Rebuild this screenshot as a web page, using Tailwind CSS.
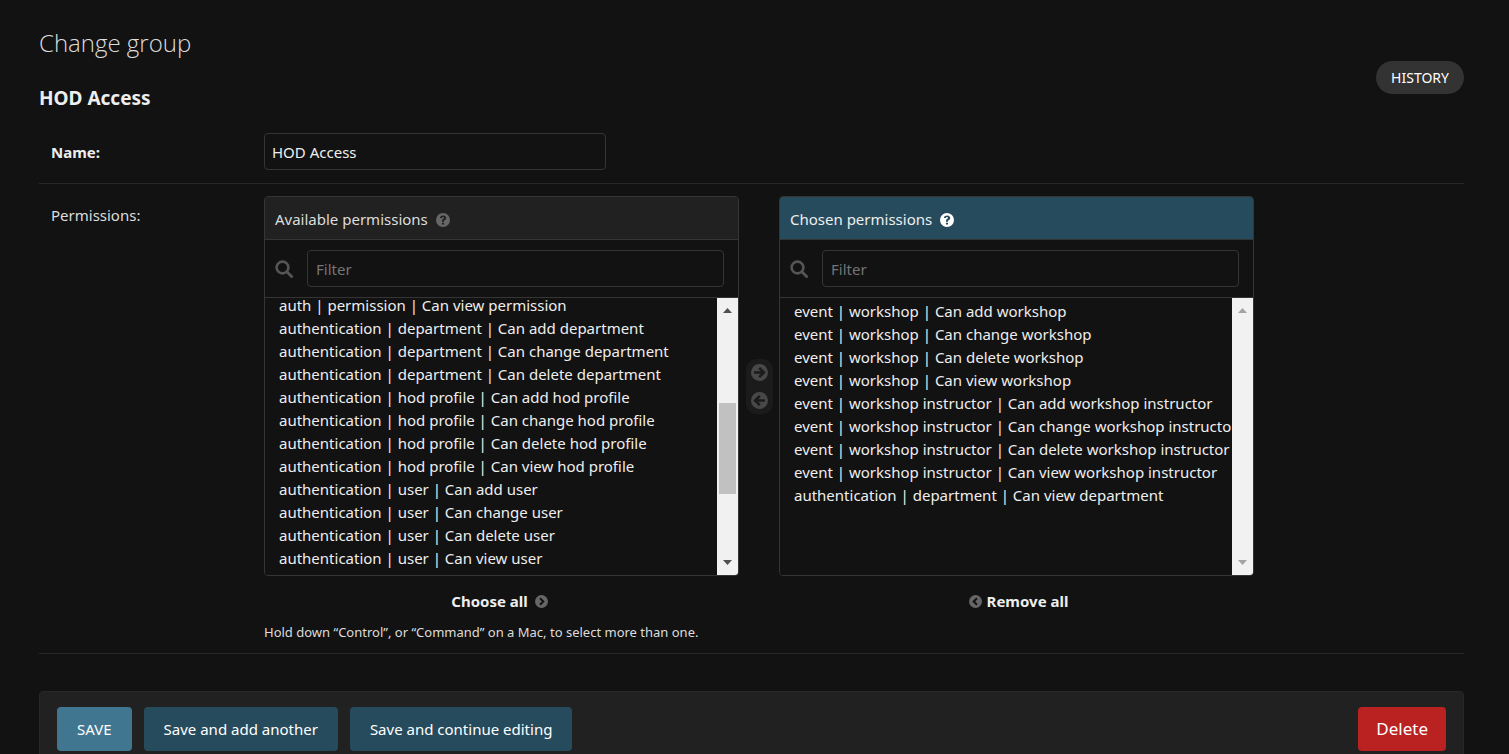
<!DOCTYPE html>
<html lang="en">
<head>
<meta charset="utf-8">
<meta name="viewport" content="width=device-width, initial-scale=1">
<title>Change group</title>
<script src="https://cdn.jsdelivr.net/npm/@tailwindcss/browser@4"></script>
</head>
<body class="h-screen overflow-hidden bg-[#121212] font-['Noto_Sans','Open_Sans',sans-serif] text-[15px] text-[#eeeeee]">
<svg class="hidden" aria-hidden="true">
  <symbol id="search" viewBox="0 0 18 18"><circle cx="7.5" cy="7.5" r="5.9" fill="none" stroke="currentColor" stroke-width="2.6"/><path d="M11.8 11.8L16.6 16.6" stroke="currentColor" stroke-width="2.8" stroke-linecap="round"/></symbol>
  <symbol id="help" viewBox="0 0 14 14"><path fill="currentColor" fill-rule="evenodd" d="M7 0a7 7 0 1 1 0 14A7 7 0 0 1 7 0ZM6 9.7v1.8h2V9.7ZM3.9 5h1.9c.1-.7.5-1 1.2-1 .6 0 1 .3 1 .8 0 .6-.4.8-1 1.200C6.300 6.500 6 7 6 7.800v.9h2v-.5c0-.4.3-.7.9-1.100C9.700 6.600 10.200 5.900 10.200 4.900 10.200 3.300 8.900 2.400 7.100 2.400 5.200 2.400 4 3.300 3.900 5Z"/></symbol>
  <symbol id="arrow" viewBox="0 0 17 17"><circle cx="8.500" cy="8.500" r="8.500" fill="currentColor"/><path d="M3 8.500H12.500M8.200 3.800L12.900 8.500L8.200 13.200" fill="none" stroke="#1b1b1b" stroke-width="2.600"/></symbol>
  <symbol id="chevron" viewBox="0 0 13 13"><circle cx="6.500" cy="6.500" r="6.500" fill="currentColor"/><path d="M5 3.200L8.300 6.500L5 9.800" fill="none" stroke="#121212" stroke-width="2"/></symbol>
  <symbol id="up" viewBox="0 0 9 5"><path fill="currentColor" d="M0 5L4.500 0L9 5Z"/></symbol>
</svg>
<main class="pt-[27px] pr-[45px] pl-[39px]">
  <div class="flex items-end justify-between">
    <div>
      <h1 class="font-['Open_Sans','Noto_Sans',sans-serif] text-2xl leading-8 font-light text-[#dddddd]">Change group</h1>
      <h2 class="mt-[25px] text-[19px] leading-7 font-bold">HOD Access</h2>
    </div>
    <a href="#" class="mb-[18px] rounded-full bg-[#333333] px-[15px] text-sm leading-[33px] text-white">HISTORY</a>
  </div>
  <form>
    <div class="mt-[9px] flex items-center border-b border-[#272727] pt-3 pb-[13px] pl-3">
      <label for="name" class="w-[213px] leading-6 font-bold">Name:</label>
      <input id="name" type="text" value="HOD Access" class="h-[37px] w-[342px] rounded border border-[#353535] bg-[#121212] px-[7px]">
    </div>
    <div class="flex border-b border-[#272727] pt-3 pb-[11px] pl-3">
      <label for="available" class="w-[213px] shrink-0 pt-[7px] leading-6 text-[#dddddd]">Permissions:</label>
      <div class="min-w-0 flex-1">
        <div class="flex max-w-[990px]">
          <section class="min-w-0 flex-1">
            <div class="overflow-hidden rounded border border-[#353535]">
              <h3 class="flex h-[43px] items-center gap-2 border-b border-[#353535] bg-[#212121] px-[10px] pt-[3px] text-[#dddddd]">Available permissions <svg class="size-[14px] text-[#666666]"><use href="#help"/></svg></h3>
              <div class="flex items-center border-b border-[#353535] py-[10px] pr-[14px] pl-[10px]">
                <svg class="size-[18px] shrink-0 text-[#555555]"><use href="#search"/></svg>
                <input type="text" aria-label="Filter available permissions" placeholder="Filter" class="ml-[14px] h-[37px] min-w-0 flex-1 rounded border border-[#353535] bg-[#121212] px-2 placeholder:text-[#757575]">
              </div>
              <div class="flex h-[277px]">
                <select id="available" multiple size="12" class="block h-full min-w-0 flex-1 overflow-hidden bg-[#121212] pl-[14px] text-[15px] text-[#eeeeee] [scrollbar-width:none] [&>option]:h-[23px] [&>option]:p-0 [&>option]:leading-[23px]">
                  <option>auth | permission | Can delete permission</option>
                  <option>auth | permission | Can view permission</option>
                  <option>authentication | department | Can add department</option>
                  <option>authentication | department | Can change department</option>
                  <option>authentication | department | Can delete department</option>
                  <option>authentication | hod profile | Can add hod profile</option>
                  <option>authentication | hod profile | Can change hod profile</option>
                  <option>authentication | hod profile | Can delete hod profile</option>
                  <option>authentication | hod profile | Can view hod profile</option>
                  <option>authentication | user | Can add user</option>
                  <option>authentication | user | Can change user</option>
                  <option>authentication | user | Can delete user</option>
                  <option>authentication | user | Can view user</option>
                  <option>contenttypes | content type | Can add content type</option>
                </select>
                <div class="flex w-[21px] flex-col items-center bg-[#f1f1f1] py-[10px] text-[#505050]" aria-hidden="true">
                  <svg class="h-[5px] w-[9px]"><use href="#up"/></svg>
                  <div class="mt-[90px] mb-auto h-[91px] w-[17px] bg-[#c1c1c1]"></div>
                  <svg class="h-[5px] w-[9px] rotate-180"><use href="#up"/></svg>
                </div>
              </div>
            </div>
            <a href="#" class="mt-[13px] flex items-center justify-center gap-[7px] pr-1 leading-6 font-bold">Choose all <svg class="size-[13px] text-[#666666]"><use href="#chevron"/></svg></a>
          </section>
          <div class="mt-[163px] flex h-[55px] w-10 justify-center">
            <div class="flex w-[27px] flex-col items-center justify-center gap-[11px] rounded-[10px] bg-[#1b1b1b] text-[#484848]">
              <button type="button" aria-label="Choose" class="block size-[17px]"><svg class="size-[17px]"><use href="#arrow"/></svg></button>
              <button type="button" aria-label="Remove" class="block size-[17px]"><svg class="size-[17px] rotate-180"><use href="#arrow"/></svg></button>
            </div>
          </div>
          <section class="min-w-0 flex-1">
            <div class="overflow-hidden rounded border border-[#353535]">
              <h3 class="flex h-[43px] items-center gap-2 border-b border-[#353535] bg-[#264b5d] px-[10px] pt-[3px] text-[#eeeeee]">Chosen permissions <svg class="size-[14px] text-white"><use href="#help"/></svg></h3>
              <div class="flex items-center border-b border-[#353535] py-[10px] pr-[14px] pl-[10px]">
                <svg class="size-[18px] shrink-0 text-[#555555]"><use href="#search"/></svg>
                <input type="text" aria-label="Filter chosen permissions" placeholder="Filter" class="ml-[14px] h-[37px] min-w-0 flex-1 rounded border border-[#353535] bg-[#121212] px-2 placeholder:text-[#757575]">
              </div>
              <div class="flex h-[277px]">
                <select aria-label="Chosen permissions" multiple size="12" class="block h-full min-w-0 flex-1 overflow-hidden bg-[#121212] pt-[3px] pl-[14px] text-[15px] text-[#eeeeee] [scrollbar-width:none] [&>option]:h-[23px] [&>option]:p-0 [&>option]:leading-[23px]">
                  <option>event | workshop | Can add workshop</option>
                  <option>event | workshop | Can change workshop</option>
                  <option>event | workshop | Can delete workshop</option>
                  <option>event | workshop | Can view workshop</option>
                  <option>event | workshop instructor | Can add workshop instructor</option>
                  <option>event | workshop instructor | Can change workshop instructor</option>
                  <option>event | workshop instructor | Can delete workshop instructor</option>
                  <option>event | workshop instructor | Can view workshop instructor</option>
                  <option>authentication | department | Can view department</option>
                </select>
                <div class="flex w-[21px] flex-col items-center justify-between bg-[#f1f1f1] py-[10px] text-[#a3a3a3]" aria-hidden="true">
                  <svg class="h-[5px] w-[9px]"><use href="#up"/></svg>
                  <svg class="h-[5px] w-[9px] rotate-180"><use href="#up"/></svg>
                </div>
              </div>
            </div>
            <a href="#" class="mt-[13px] flex items-center justify-center gap-[5px] pl-1 leading-6 font-bold"><svg class="size-[13px] rotate-180 text-[#666666]"><use href="#chevron"/></svg> Remove all</a>
          </section>
        </div>
        <p class="mt-[9px] text-[13px] leading-5 text-[#dddddd]">Hold down “Control”, or “Command” on a Mac, to select more than one.</p>
      </div>
    </div>
    <div class="mt-[37px] flex gap-3 rounded border border-[#272727] bg-[#212121] px-[17px] py-[15px] text-white">
      <button type="submit" class="h-11 rounded bg-[#417690] px-5">SAVE</button>
      <button type="submit" class="h-11 rounded bg-[#264b5d] px-5">Save and add another</button>
      <button type="submit" class="h-11 rounded bg-[#264b5d] px-5">Save and continue editing</button>
      <a href="#" class="ml-auto h-11 rounded bg-[#ba2121] px-[18px] text-[17px] leading-[44px]">Delete</a>
    </div>
  </form>
</main>
<script>document.getElementById('available').scrollTop = 26;</script>
</body>
</html>
